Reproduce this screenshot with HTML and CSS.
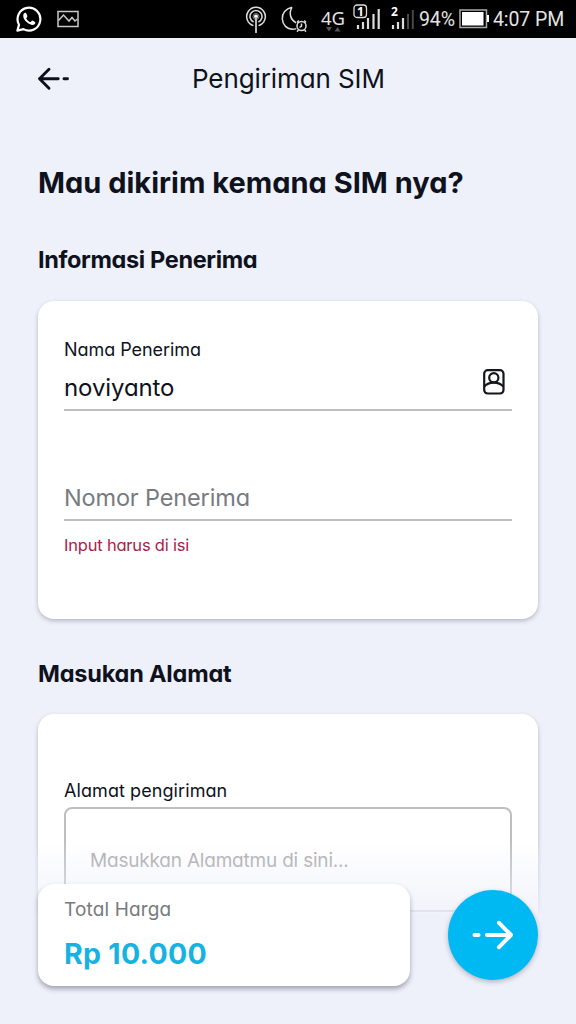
FILE: index.html
```html
<!DOCTYPE html>
<html lang="id">
<head>
<meta charset="utf-8">
<title>Pengiriman SIM</title>
<link rel="stylesheet" href="styles.css">
</head>
<body>
<div class="screen">
  <div class="status">
    <svg class="whatsapp" width="26" height="26" viewBox="0 0 26 26" fill="none">
      <path d="M1.400 24.600 3 18.700A11.400 11.400 0 1 1 7.400 23.100Z" stroke="#fff" stroke-width="2.200" stroke-linejoin="round"/>
      <path d="M9.100 6.700c-.5 0-1.900 1-1.900 3.100 0 2.600 2 5 3.400 6.300 1.800 1.700 4.300 2.900 5.900 2.900 1.700 0 2.900-1.300 2.900-2.600 0-.6-2.700-2-3.200-2-.6 0-1.200 1.700-1.800 1.700-1.200 0-4.100-2.900-4.100-3.900 0-.5 1.100-1.100 1.100-1.800 0-.5-1.200-3.300-1.700-3.600z" fill="#fff"/>
    </svg>
    <svg class="photo" width="22" height="18" viewBox="0 0 22 18" fill="none" stroke="#c8c8c8">
      <rect x="1" y="1.500" width="20" height="15" stroke-width="1.500"/>
      <path d="m1.500 10.500 5-5.500 5.500 6 3-3.500 3 3.500 2.500-2" stroke-width="1.500"/>
    </svg>
    <svg class="cast" width="22" height="28" viewBox="0 0 22 28" fill="none" stroke="#ddd" stroke-width="1.500">
      <path d="M8.500 19.600a9.300 9.300 0 1 1 5 0M8.600 16a6 6 0 1 1 4.800 0"/>
      <circle cx="11" cy="10.500" r="3" stroke="#888" stroke-width="1"/>
      <circle cx="11" cy="10.500" r="2" fill="#fff" stroke="none"/>
      <path d="M11 11v16" stroke="#bbb" stroke-width="2"/>
    </svg>
    <svg class="moon" width="27" height="28" viewBox="0 0 27 28" fill="none" stroke="#ddd" stroke-width="1.500">
      <path d="M11 2.200C4.500 3.500 1 8.500 1.300 14c.4 6 4.700 10.200 10.300 10.200 1.500 0 2.600-.2 3.700-.6M11 2.200c-3.500 6.500-1.500 12.600 4 15.600"/>
      <circle cx="20.500" cy="21" r="4.500"/>
      <path d="M20.500 18.500V21l-2 1.500M16 17.500l1.800-2M25 17.500l-1.800-2M17.300 25l-1.200 1.700M23.700 25l1.200 1.700"/>
    </svg>
    <div class="network"><span>4G</span><svg width="16" height="6" viewBox="0 0 16 6" fill="#555"><path d="M1 1h6L4 5.500zM9.500 5.500h6L12.500 1z"/></svg></div>
    <div class="signal signal-one">
      <svg width="28" height="26" viewBox="0 0 28 26">
        <path d="M5 21v4M10 18v7M15 14v11M20.500 10v15M25.700 5v20" stroke="#ddd" stroke-width="2.200"/>
        <rect x="1" y="1" width="12.500" height="12.500" rx="3" fill="#000" stroke="#ddd" stroke-width="1.300"/>
      </svg>
      <b>1</b>
    </div>
    <div class="signal signal-two">
      <svg width="23" height="26" viewBox="0 0 23 26">
        <path d="M2 21v4M7 18v7M12 14v11" stroke="#ddd" stroke-width="2.200"/>
        <path d="M17 10v15M21.800 6v19" stroke="#484848" stroke-width="2"/>
      </svg>
      <b>2</b>
    </div>
    <span class="percent">94%</span>
    <svg class="battery" width="30" height="20" viewBox="0 0 30 20">
      <rect x="1" y="1" width="26.500" height="17.500" fill="none" stroke="#aaa" stroke-width="1.500"/>
      <path d="M3 3h21.500v13.500H3zM28 6h2v7h-2z" fill="#fff"/>
    </svg>
    <span class="clock">4:07 PM</span>
  </div>

  <header class="topbar">
    <svg class="back" width="34" height="24" viewBox="0 0 34 24" fill="none" stroke="#0c101c" stroke-width="2.900" stroke-linecap="round" stroke-linejoin="round">
      <path d="M13 2.300 3.500 11.800l9.500 9.500M3.500 11.800h18.700M28 11.800h3.500"/>
    </svg>
    <h1 class="title">Pengiriman SIM</h1>
  </header>

  <main class="content">
    <h2 class="question">Mau dikirim kemana SIM nya?</h2>
    <h3 class="section recipient-title">Informasi Penerima</h3>
    <section class="card recipient">
      <label class="label name-label">Nama Penerima</label>
      <div class="field name-field">
        <span class="name-value">noviyanto</span>
        <svg class="contact" width="22" height="26" viewBox="0 0 22 26" fill="none" stroke="#15171c" stroke-width="2.200">
          <rect x="1.200" y="1.200" width="19.300" height="23.300" rx="3.500"/>
          <circle cx="10.800" cy="8.700" r="4.600"/>
          <path d="M1.200 17.600c2-2.300 5.500-4 9.600-4s7.600 1.700 9.600 4"/>
        </svg>
      </div>
      <div class="field phone-field"><span class="phone-hint">Nomor Penerima</span></div>
      <p class="error">Input harus di isi</p>
    </section>
    <h3 class="section address-title">Masukan Alamat</h3>
    <section class="card address">
      <label class="label address-label">Alamat pengiriman</label>
      <div class="textarea"><span class="address-hint">Masukkan Alamatmu di sini...</span></div>
    </section>
  </main>

  <footer class="footer">
    <div class="total">
      <span class="total-label">Total Harga</span>
      <strong class="price">Rp 10.000</strong>
    </div>
    <button class="next" aria-label="Lanjut">
      <svg width="42" height="30" viewBox="0 0 42 30" fill="none" stroke="#fff" stroke-width="4" stroke-linecap="round" stroke-linejoin="round">
        <path d="M27 2.800 39 15 27 27.200M39 15H15M2.500 15h4"/>
      </svg>
    </button>
  </footer>
</div>
</body>
</html>
```

FILE: styles.css
```css
* { box-sizing: border-box; }
body { margin: 0; background: #eef0fa; }
h1, h2, h3, p { margin: 0; }
.screen {
  position: relative;
  width: 576px;
  height: 1024px;
  overflow: hidden;
  background: #eef0fa;
  color: #0e121d;
  font-family: Inter, sans-serif;
  font-weight: 400;
  font-feature-settings: "cv11";
  white-space: nowrap;
}
.status {
  display: flex;
  align-items: flex-start;
  height: 38px;
  padding-left: 16px;
  background: #000;
  color: #e4e4e4;
  font-family: Roboto, sans-serif;
  font-size: 19.500px;
  line-height: 24px;
}
.status > * { flex: none; }
.whatsapp { margin-top: 6px; }
.photo { margin: 10px 0 0 15px; }
.cast { margin: 6px 0 0 166px; }
.moon { margin: 5px 0 0 14px; }
.network {
  display: flex;
  flex-direction: column;
  align-items: center;
  width: 24px;
  margin: 6px 0 0 13px;
  font-family: "Noto Sans", sans-serif;
  font-size: 18.500px;
}
.network svg { margin-top: -4px; }
.signal { display: grid; width: 28px; margin: 4px 0 0 8px; }
.signal svg, .signal b { grid-area: 1 / 1; }
.signal b { padding-left: 4px; font: bold 12px/15px "Noto Sans", sans-serif; color: #fff; }
.signal-two { width: 23px; margin-left: 10px; }
.signal-two b { padding-left: 0; }
.percent { width: 36px; margin: 8px 0 0 5px; letter-spacing: -.1px; }
.battery { margin: 9px 0 0 4px; }
.clock { margin: 8px 0 0 4px; letter-spacing: -.1px; }

.topbar { display: flex; align-items: center; height: 82px; padding-left: 36px; }
.back { margin-bottom: 1px; }
.title { margin-left: 122px; font-size: 26px; font-weight: 400; line-height: 32px; letter-spacing: -.1px; }
.content { display: flex; flex-direction: column; padding: 42px 38px 0; }
.question { font-size: 29px; font-weight: 650; line-height: 41px; }
.section { font-size: 23.500px; font-weight: 650; line-height: 32px; letter-spacing: -.35px; }
.recipient-title { margin-top: 41px; }
.card {
  padding: 0 26px;
  border-radius: 16px;
  background: #fff;
  box-shadow: 0 2px 4px rgba(40, 40, 60, .28);
}
.recipient { height: 318px; margin-top: 25px; padding-top: 36px; }
.label { display: block; font-size: 18px; line-height: 25px; }
.name-label { height: 26px; letter-spacing: -.05px; }
.field {
  display: flex;
  align-items: center;
  justify-content: space-between;
  border-bottom: 2px solid #bdbec2;
  font-size: 24px;
}
.name-field { height: 48px; padding-top: 3px; letter-spacing: -.1px; }
.contact { margin: -11px 7px 0 0; }
.phone-field { height: 50px; margin-top: 60px; padding-top: 4px; color: #777b80; font-size: 23.500px; letter-spacing: -.15px; }
.error { margin-top: 11px; color: #a91e48; font-size: 16.500px; line-height: 26px; letter-spacing: -.2px; }
.address-title { margin-top: 39px; letter-spacing: -.2px; }
.address { height: 380px; margin-top: 24px; padding-top: 64px; }
.address-label { letter-spacing: .08px; }
.textarea {
  height: 105px;
  margin-top: 4px;
  padding: 38px 24px;
  border: 2px solid #bdbec2;
  border-radius: 8px;
  color: #aaa;
  font-size: 19px;
  line-height: 28px;
  letter-spacing: -.2px;
}
.footer {
  position: absolute;
  left: 0;
  right: 0;
  bottom: 0;
  display: flex;
  justify-content: space-between;
  height: 184px;
  padding: 44px 38px 0;
  background: linear-gradient(rgba(238, 240, 250, 0), rgba(238, 240, 250, .7) 70px, #eef0fa 76px);
}
.total {
  display: flex;
  flex-direction: column;
  width: 372px;
  height: 102px;
  padding: 12px 26px;
  border-radius: 16px;
  background: #fff;
  box-shadow: 0 3px 5px rgba(40, 40, 60, .38);
}
.total-label { color: #777b80; font-size: 19px; line-height: 27px; letter-spacing: .15px; }
.price { margin-top: 13px; color: #16b3e0; font-size: 28.500px; font-weight: 650; line-height: 36px; letter-spacing: .3px; }
.next {
  display: grid;
  place-items: center;
  width: 90px;
  height: 90px;
  margin-top: 6px;
  padding: 0;
  border: 0;
  border-radius: 50%;
  background: #00b9f3;
  box-shadow: 0 2px 5px rgba(40, 40, 60, .3);
}
```
